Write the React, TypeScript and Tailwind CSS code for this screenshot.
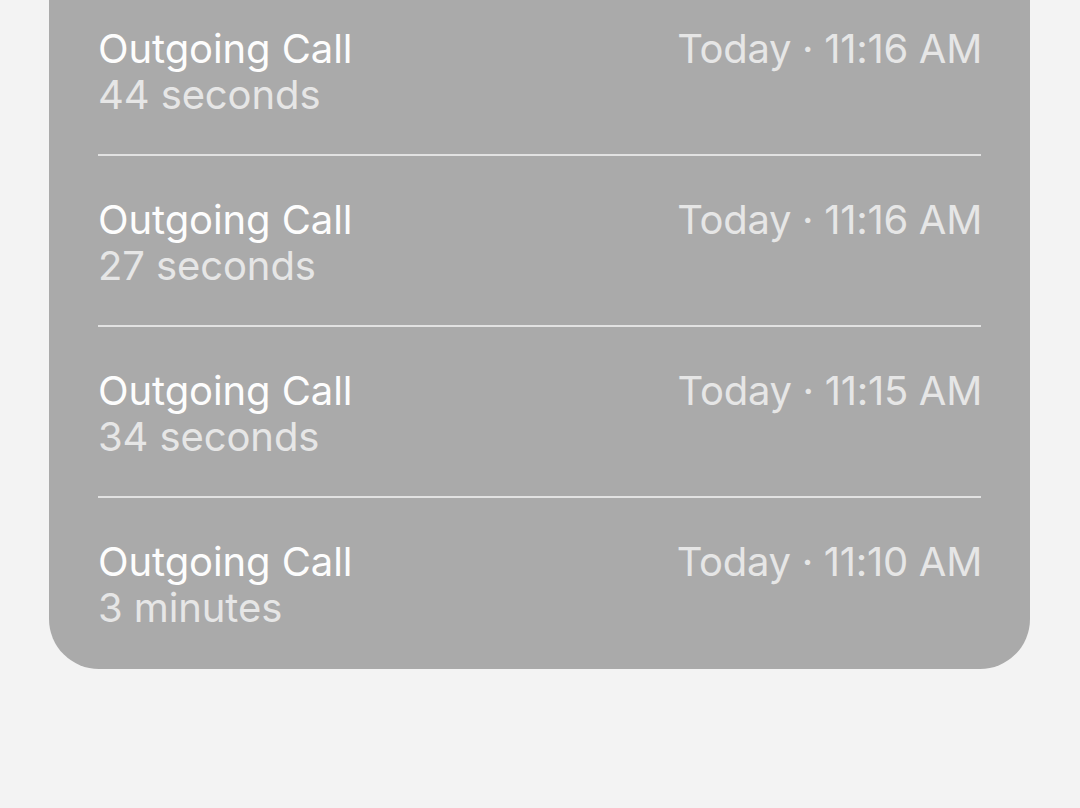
import React from "react";

const rows = [
  { sub: "44 seconds", time: "Today · 11:16 AM" },
  { sub: "27 seconds", time: "Today · 11:16 AM" },
  { sub: "34 seconds", time: "Today · 11:15 AM" },
  { sub: "3 minutes", time: "Today · 11:10 AM" },
];

export default function App() {
  return (
    <div
      className="w-[1080px] h-[808px] overflow-hidden bg-[#f3f3f3]"
      style={{ fontFamily: "Inter, 'Noto Sans', sans-serif" }}
    >
      <div className="mx-[49px] mt-[-15px] w-[981px] rounded-b-[50px] bg-[#aaaaaa] px-[49px] pb-[2px]">
        {rows.map((r, i) => (
          <div key={i}>
            {i > 0 && <div className="h-[2px] bg-[#e2e2e2]" />}
            <div className="h-[169px] pt-[41px] flex justify-between">
              <div className="text-[40px] leading-[46px] tracking-[-0.1px]">
                <div className="text-[#fdfdfd]">Outgoing Call</div>
                <div className="text-[#e6e6e6]">{r.sub}</div>
              </div>
              <div className="text-[40px] leading-[46px] tracking-[-0.3px] text-[#e6e6e6] mr-[-1px]">
                {r.time}
              </div>
            </div>
          </div>
        ))}
      </div>
    </div>
  );
}
